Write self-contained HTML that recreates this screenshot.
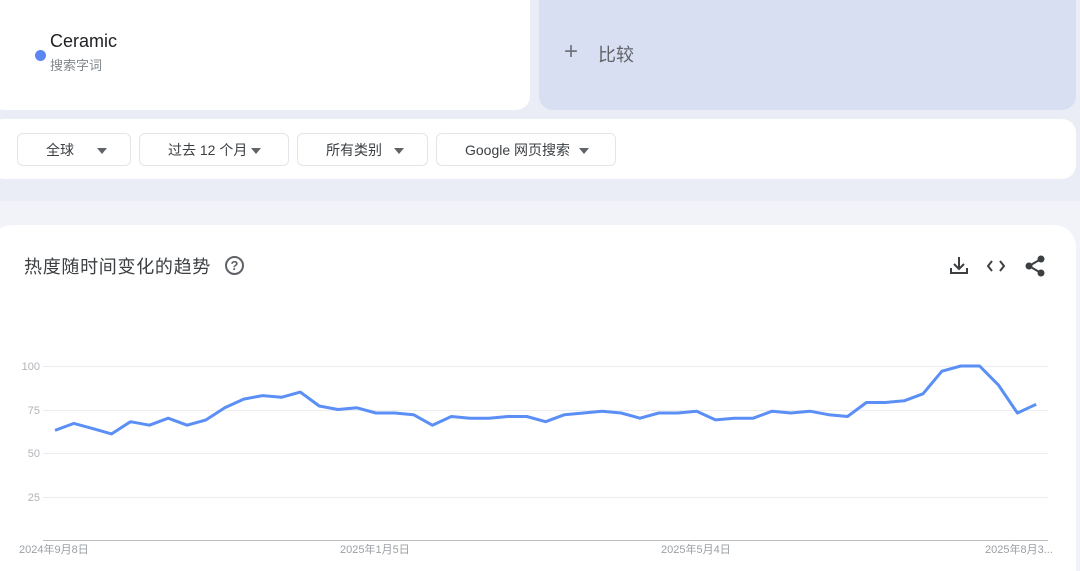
<!DOCTYPE html>
<html style="overflow:hidden;width:1080px;height:571px"><head><meta charset="utf-8"><style>
*{margin:0;padding:0;box-sizing:border-box}
body{width:1080px;height:571px;overflow:hidden;background:#eaedf6;font-family:"Liberation Sans","Noto Sans CJK SC",sans-serif;position:relative}
.abs{position:absolute}
.card1{left:-10px;top:-20px;width:540px;height:130px;background:#fff;border-radius:14px}
.card2{left:539px;top:-20px;width:537px;height:130px;background:#d9dff2;border-radius:14px}
.bar{left:-10px;top:119px;width:1086px;height:60px;background:#fff;border-radius:14px}
.chip{top:133px;height:33px;border:1px solid #e3e5ea;border-radius:6px;background:#fff;font-size:14px;color:#3c4043;display:flex;align-items:center}
.tri{width:0;height:0;border-left:5px solid transparent;border-right:5px solid transparent;border-top:6px solid #5f6368;position:absolute;top:14px}
.low{left:0;top:201px;width:1080px;height:370px;background:#f1f3f8}
.card3{left:-10px;top:225px;width:1086px;height:346px;background:#fff;border-radius:22px 22px 0 0}
</style></head><body>
<div class="abs card1"></div>
<div class="abs" style="left:35px;top:50px;width:11px;height:11px;border-radius:50%;background:#5b87f2"></div>
<div class="abs" style="left:50px;top:31px;font-size:18px;color:#202124">Ceramic</div>
<div class="abs" style="left:50px;top:55px;font-size:13px;color:#80868b">搜索字词</div>
<div class="abs card2"></div>
<div class="abs" style="left:564px;top:38px;font-size:24px;color:#70757a;font-weight:300">+</div>
<div class="abs" style="left:598px;top:41px;font-size:18px;color:#5f6368">比较</div>
<div class="abs bar"></div>
<div class="abs chip" style="left:17px;width:114px"><span style="margin-left:28px">全球</span><div class="tri" style="left:79px"></div></div>
<div class="abs chip" style="left:139px;width:150px"><span style="margin-left:28px">过去 12 个月</span><div class="tri" style="left:111px"></div></div>
<div class="abs chip" style="left:297px;width:131px"><span style="margin-left:28px">所有类别</span><div class="tri" style="left:96px"></div></div>
<div class="abs chip" style="left:436px;width:180px"><span style="margin-left:28px">Google 网页搜索</span><div class="tri" style="left:142px"></div></div>
<div class="abs low"></div>
<div class="abs card3"></div>
<div class="abs" style="left:24px;top:253px;font-size:18px;letter-spacing:0.7px;color:#3c4043">热度随时间变化的趋势</div>
<div class="abs" style="left:225px;top:256px;width:19px;height:19px;border:2px solid #5f6368;border-radius:50%;font-size:13px;color:#5f6368;text-align:center;line-height:15px;font-weight:bold">?</div>
<svg class="abs" style="left:0;top:0" width="1080" height="571">
<g stroke="#3c4043" stroke-width="2" fill="none">
<path d="M959 257v12M954 264l5 5 5-5M951 268v5h16v-5"/>
<path d="M992 261l-4 5 4 5M1000 261l4 5-4 5"/>
<circle cx="1041" cy="259" r="2.5" fill="#3c4043"/><circle cx="1029" cy="266" r="2.5" fill="#3c4043"/><circle cx="1041" cy="273" r="2.5" fill="#3c4043"/>
<path d="M1029 266l12-7M1029 266l12 7"/>
</g>
<g stroke="#ececee" stroke-width="1"><path d="M43 366.5h1005M43 410.5h1005M43 453.5h1005M43 497.5h1005"/></g>
<path d="M43 540.5h1005" stroke="#bdbdbd" stroke-width="1"/>
<polyline fill="none" stroke="#5b8ff5" stroke-width="3" stroke-linejoin="round" points="55,430.4 73.9,423.4 92.7,428.6 111.6,433.9 130.5,421.7 149.4,425.2 168.2,418.2 187.1,425.2 206,419.9 224.8,407.8 243.7,399.1 262.6,395.6 281.4,397.3 300.3,392.1 319.2,406 338,409.5 356.9,407.8 375.8,413 394.7,413 413.5,414.7 432.4,425.2 451.3,416.5 470.1,418.2 489,418.2 507.9,416.5 526.8,416.5 545.6,421.7 564.5,414.7 583.4,413 602.2,411.2 621.1,413 640,418.2 658.8,413 677.7,413 696.6,411.2 715.5,419.9 734.3,418.2 753.2,418.2 772.1,411.2 790.9,413 809.8,411.2 828.7,414.7 847.5,416.5 866.4,402.5 885.3,402.5 904.2,400.8 923,393.8 941.9,371.2 960.8,366 979.6,366 998.5,385.1 1017.4,413 1036.2,404.3"/>
<g fill="#b0b3b8" font-size="11" font-family="Liberation Sans,Noto Sans CJK SC,sans-serif" text-anchor="end">
<text x="40" y="370">100</text><text x="40" y="414">75</text><text x="40" y="457">50</text><text x="40" y="501">25</text>
</g>
<g fill="#9aa0a6" font-size="11" font-family="Liberation Sans,Noto Sans CJK SC,sans-serif">
<text x="19" y="553">2024年9月8日</text><text x="340" y="553">2025年1月5日</text><text x="661" y="553">2025年5月4日</text><text x="985" y="553">2025年8月3...</text>
</g>
</svg>
</body></html>
